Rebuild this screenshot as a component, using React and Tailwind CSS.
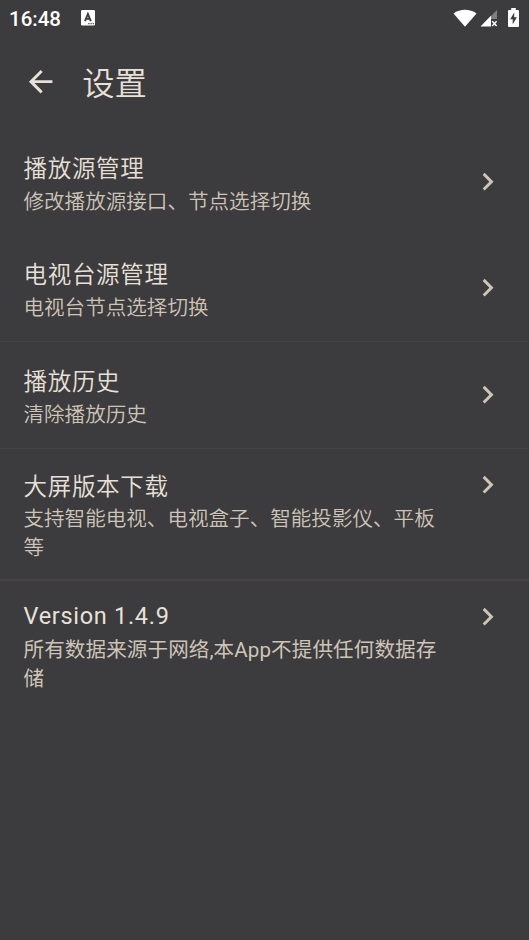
import { MdArrowBack, MdKeyboardArrowRight } from 'react-icons/md';

const groups = [
  {
    rows: [
      { title: '播放源管理', desc: '修改播放源接口、节点选择切换' },
      { title: '电视台源管理', desc: '电视台节点选择切换' },
    ],
  },
  { divider: 'border-t', rows: [{ title: '播放历史', desc: '清除播放历史' }] },
  {
    divider: 'border-t',
    rows: [{ title: '大屏版本下载', desc: '支持智能电视、电视盒子、智能投影仪、平板等', tall: true, offset: 'pt-[2.5px]' }],
  },
  {
    divider: 'border-t-2',
    rows: [
      {
        title: 'Version 1.4.9',
        desc: '所有数据来源于网络,本App不提供任何数据存储',
        tall: true,
        offset: 'font-normal',
        descClass: 'pt-[1.5px] tracking-[0.1px]',
      },
    ],
  },
];

function StatusBar() {
  return (
    <div className="flex h-[35px] items-center pl-[9px] pr-[10px] text-white">
      <span className="mt-[3px] text-[20.5px] leading-none font-medium">16:48</span>
      <svg className="ml-[20px] h-[16px] w-[14px]" viewBox="0 0 14 16">
        <rect width="14" height="15.5" rx="1.2" fill="#fff" />
        <path d="M4 11.2 6.9 4l2.9 7.2M5 8.9h3.8" fill="none" stroke="#3c3b3d" strokeWidth="1.9" />
        <path d="M7.3 13.6h1.2M9.5 13.6h1.2M11.7 13.6h1.2" stroke="#3c3b3d" strokeWidth="1.1" />
      </svg>
      <div className="ml-auto flex items-center">
        <svg className="h-[18px] w-[24px]" viewBox="0 0 24 18">
          <path d="M.5 4.4C7-.6 17-.6 23.5 4.4L12 17.7z" fill="#fff" />
        </svg>
        <svg className="ml-[3px] mt-px h-[18px] w-[18px]" viewBox="0 0 18 18">
          <path d="M17 1v9h-6v7H1z" fill="#fff" opacity=".35" />
          <path d="M11 6.8V17.4H.5z" fill="#fff" />
          <path d="m12.2 12.3 4.4 4.8m0-4.8-4.4 4.8" stroke="#fff" strokeWidth="1.5" />
        </svg>
        <svg className="ml-[10px] -mt-px h-[19px] w-[11px]" viewBox="0 0 11 19">
          <path d="M3.2 0h4.6v2h2.2q1 0 1 1v15q0 1-1 1H1q-1 0-1-1V3q0-1 1-1h2.2z" fill="#fff" />
          <path d="M6.2 4.5 2.2 11.3h2.5v4.9l4.2-7H6.2z" fill="#3c3b3d" />
        </svg>
      </div>
    </div>
  );
}

function SettingRow({ item }) {
  return (
    <li className={item.tall ? 'flex h-[130px] items-start px-[23.5px] pt-[18px]' : 'flex h-[106px] items-center px-[23.5px]'}>
      <div className={`min-w-0 flex-1 pr-[23px] ${item.offset || 'pt-[5px]'}`}>
        <h2 className="text-[23.5px] leading-[35.3px] tracking-[0.7px] text-[#e8e1d9]">{item.title}</h2>
        <p className={`text-[20.57px] leading-[29.3px] text-[#cdc5b8] ${item.descClass || ''}`}>{item.desc}</p>
      </div>
      <MdKeyboardArrowRight className="size-[35.3px] shrink-0 text-[#cdc5b8]" />
    </li>
  );
}

export default function App() {
  return (
    <div className="min-h-[940px] w-full bg-[#3c3b3d] font-['Roboto','Noto_Sans_CJK_SC',sans-serif] font-[350]" lang="zh-CN">
      <StatusBar />
      <header className="flex h-[94px] items-center pl-[23px]">
        <MdArrowBack className="size-[35.3px] text-[#e8e1d9]" />
        <h1 className="ml-[24px] pt-[5px] text-[32.3px] leading-[41px] text-[#e8e1d9]">设置</h1>
      </header>
      <main>
        {groups.map(({ rows, divider = '' }) => (
          <ul key={rows[0].title} className={`border-[#46433e] ${divider}`}>
            {rows.map((item) => (
              <SettingRow key={item.title} item={item} />
            ))}
          </ul>
        ))}
      </main>
    </div>
  );
}
